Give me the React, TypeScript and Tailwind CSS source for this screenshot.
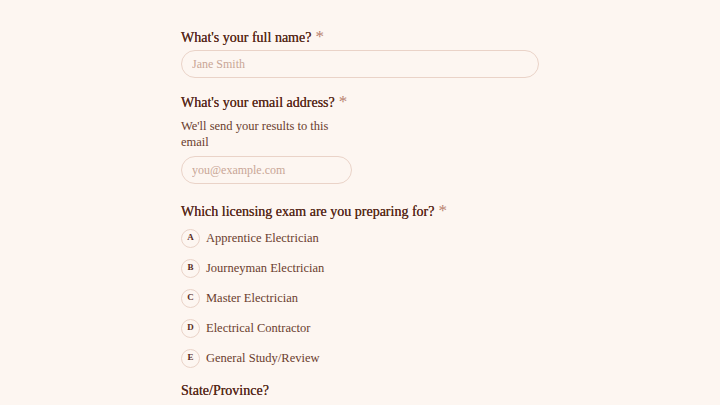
import React from 'react';

const options = [
  { key: 'A', label: 'Apprentice Electrician' },
  { key: 'B', label: 'Journeyman Electrician' },
  { key: 'C', label: 'Master Electrician' },
  { key: 'D', label: 'Electrical Contractor' },
  { key: 'E', label: 'General Study/Review' },
];

function Label({ children, required }: { children: React.ReactNode; required?: boolean }) {
  return (
    <div className="text-[14px] leading-[20px] text-[#572a1c] [text-shadow:0_0_0.4px_#572a1c]">
      {children}
      {required && <span className="ml-1 text-[#b98270] text-[17px] leading-[10px] [text-shadow:none]">*</span>}
    </div>
  );
}

export default function App() {
  const [selected, setSelected] = React.useState<string | null>(null);

  return (
    <div
      className="min-h-screen w-full bg-[#fdf6f1] text-[#5a2d1f]"
      style={{ fontFamily: '"Liberation Serif", "DejaVu Serif", serif' }}
    >
      <div className="mx-auto w-[358px] pt-[28px]">
        <Label required>What's your full name?</Label>
        <input
          className="mt-[2px] h-[28px] w-full rounded-full border border-[#ead3c8] bg-transparent px-[10px] text-[12px] text-[#5a2d1f] outline-none placeholder:text-[#c9a696]"
          placeholder="Jane Smith"
        />

        <div className="mt-[15px]">
          <Label required>What's your email address?</Label>
        </div>
        <p className="mt-[5px] w-[160px] text-[12.5px] leading-[16px] text-[#6b3d2e]">
          We'll send your results to this email
        </p>
        <input
          className="mt-[6px] h-[28px] w-[171px] rounded-full border border-[#ead3c8] bg-transparent px-[10px] text-[12px] text-[#5a2d1f] outline-none placeholder:text-[#c9a696]"
          placeholder="you@example.com"
        />

        <div className="mt-[18px]">
          <Label required>Which licensing exam are you preparing for?</Label>
        </div>
        <div className="mt-[6px] flex flex-col gap-[10px]">
          {options.map((o) => (
            <button
              key={o.key}
              onClick={() => setSelected(o.key)}
              className="flex h-[20px] items-center gap-[6px] text-left"
            >
              <span
                className={`flex h-[19px] w-[19px] items-center justify-center rounded-full border text-[9px] font-bold ${
                  selected === o.key ? 'border-[#5a2d1f] bg-[#5a2d1f] text-white' : 'border-[#ead3c8] text-[#5a2d1f]'
                }`}
              >
                {o.key}
              </span>
              <span className="text-[12.5px] text-[#6b3d2e]">{o.label}</span>
            </button>
          ))}
        </div>

        <div className="mt-[13px]">
          <Label>State/Province?</Label>
        </div>
      </div>
    </div>
  );
}
